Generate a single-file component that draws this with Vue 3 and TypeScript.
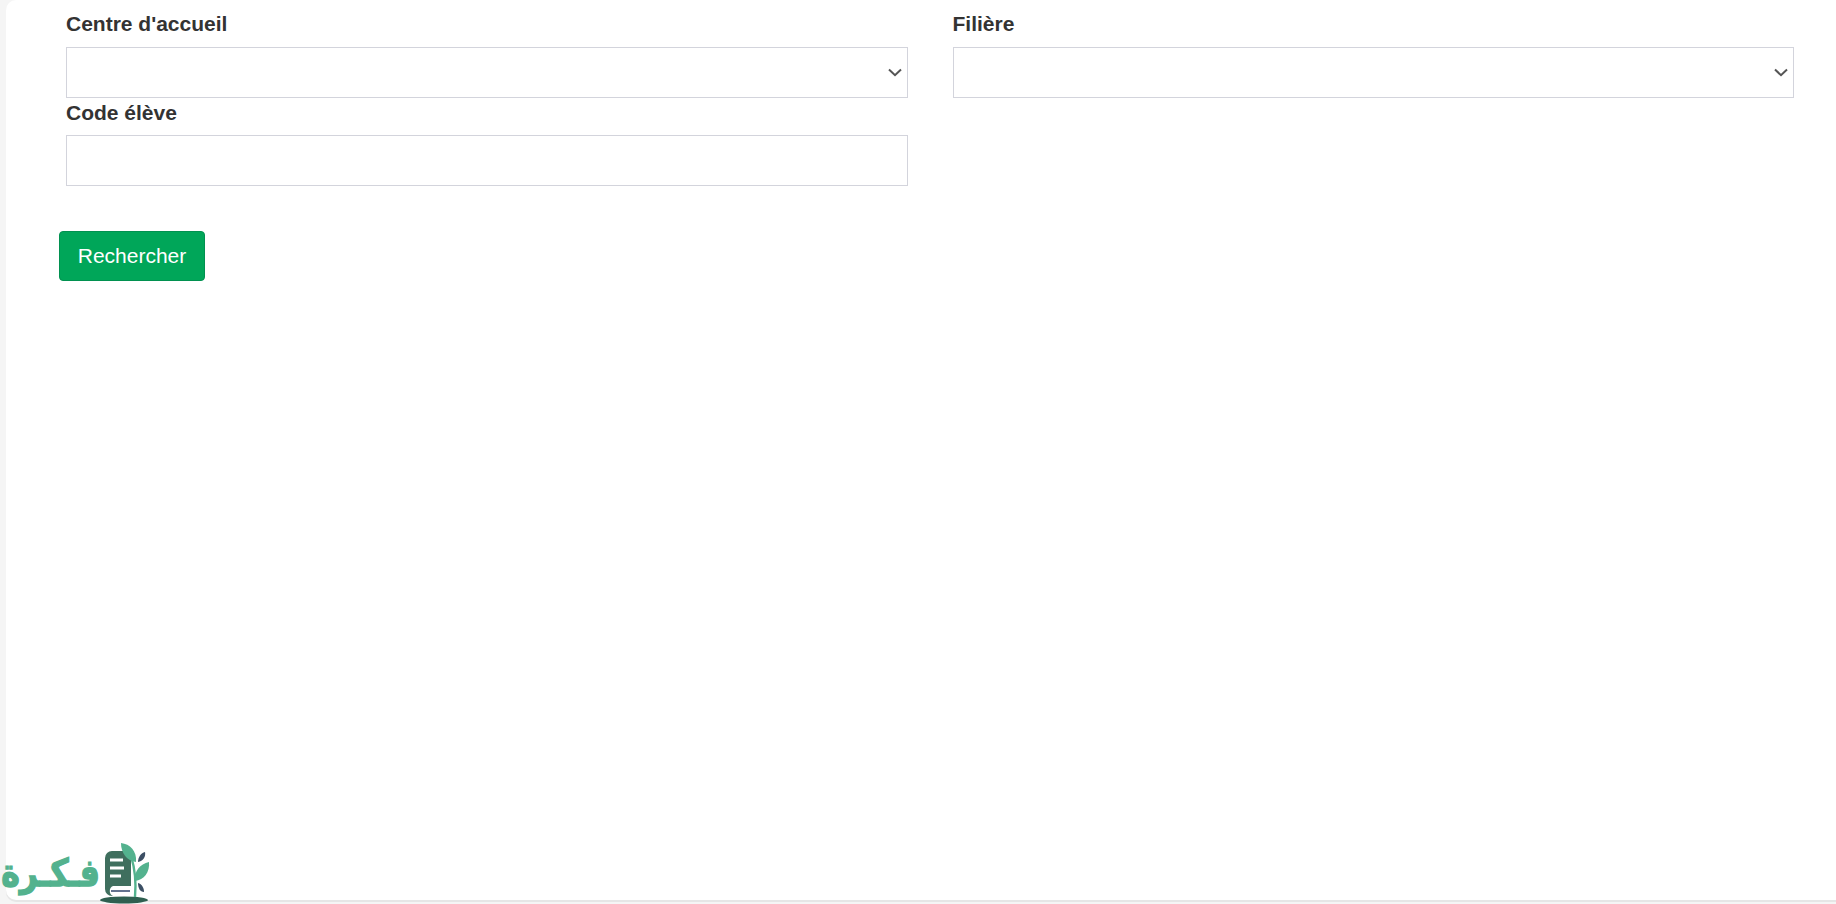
<script setup lang="ts">
const selects = [
  { id: 'centre', label: "Centre d'accueil" },
  { id: 'filiere', label: 'Filière' },
]
</script>

<template>
  <div class="page">
    <main class="card">
      <form class="form" @submit.prevent>
        <div class="fields">
          <div v-for="s in selects" :key="s.id" class="field">
            <label :for="s.id">{{ s.label }}</label>
            <div class="select-box">
              <select :id="s.id"></select>
              <svg class="chevron" viewBox="0 0 14 9" width="14" height="9" aria-hidden="true">
                <path d="M1 1.5 7 7.2 13 1.5" fill="none" stroke="#555" stroke-width="2" />
              </svg>
            </div>
          </div>
          <div class="field">
            <label for="code">Code élève</label>
            <input id="code" type="text" />
          </div>
        </div>
        <button type="submit" class="search">Rechercher</button>
      </form>
    </main>
    <div class="watermark">
      <span class="word" dir="rtl" lang="ar">فـكـرة</span>
      <svg class="mark" viewBox="0 0 52 62" width="52" height="62" aria-hidden="true">
        <ellipse cx="24" cy="58" rx="24" ry="3.5" fill="#2f5f50" />
        <path d="M5 16a7 7 0 0 1 7-7h14c3 0 5 2 5 5v40H12a7 7 0 0 1-7-7Z" fill="#3f6f5e" />
        <path d="M32 44H13a5.5 5.5 0 0 0 0 10h19Z" fill="#fff" />
        <path d="M11 49h19" stroke="#3c4f74" stroke-width="1.6" />
        <path d="M10 18h13M10 26h14M10 34h11" stroke="#fff" stroke-width="3" />
        <path d="M35 55C36 44 36 30 31 14" stroke="#53b28e" stroke-width="2.4" fill="none" />
        <path d="M21 1C30 2 37 9 36 20 27 19 21 11 21 1Z" fill="#53b28e" />
        <path d="M35 39C34 29 40 22 49 20 50 30 44 38 35 39Z" fill="#53b28e" />
        <path d="M38 20C38 15 41 11 45 10 46 15 43 19 38 20Z" fill="#3c4f64" />
        <path d="M38 41C42 42 44 46 44 50 40 50 38 46 38 41Z" fill="#3c4f64" />
      </svg>
    </div>
  </div>
</template>

<style>
html, body { margin: 0; background: #f5f5f5; }
</style>

<style scoped>
.page { position: relative; height: 904px; overflow: hidden; }
.card {
  box-sizing: border-box;
  height: 900px;
  margin-left: 6px;
  padding: 11px 42px 0 53px;
  background: #fff;
  border-radius: 10px 0 0 10px;
  box-shadow: 0 2px 0 #e6e6e6;
  font-family: "Liberation Sans", Arial, sans-serif;
}
.fields {
  display: grid;
  grid-template-columns: 1fr 1fr;
  column-gap: 45px;
  padding-left: 7px;
}
.field { display: flex; flex-direction: column; }
label {
  font-size: 21px;
  line-height: 26px;
  font-weight: 700;
  color: #333;
  margin-bottom: 10px;
}
.field:nth-child(3) label { margin-top: 2px; margin-bottom: 9px; }
.select-box { position: relative; }
select, input {
  display: block;
  box-sizing: border-box;
  width: 100%;
  height: 51px;
  border: 1px solid #d3d4dc;
  border-radius: 0;
  background: #fff;
  appearance: none;
  outline: none;
}
.chevron { position: absolute; right: 6px; top: 21px; }
.search {
  display: block;
  width: 146px;
  height: 50px;
  margin-top: 45px;
  padding: 0;
  background: #00a659;
  border: 1px solid #019150;
  border-radius: 4px;
  color: #fff;
  font: 21px "Liberation Sans", Arial, sans-serif;
}
.watermark {
  position: absolute;
  left: 0;
  top: 842px;
  display: flex;
  align-items: flex-start;
}
.word {
  display: block;
  width: 100px;
  height: 62px;
  font-family: "DejaVu Sans", sans-serif;
  font-weight: 700;
  font-size: 38px;
  line-height: 62px;
  white-space: nowrap;
  color: #53b28e;
  -webkit-text-stroke: 1.4px #53b28e;
  transform: scaleX(0.83);
  transform-origin: right center;
}
</style>
